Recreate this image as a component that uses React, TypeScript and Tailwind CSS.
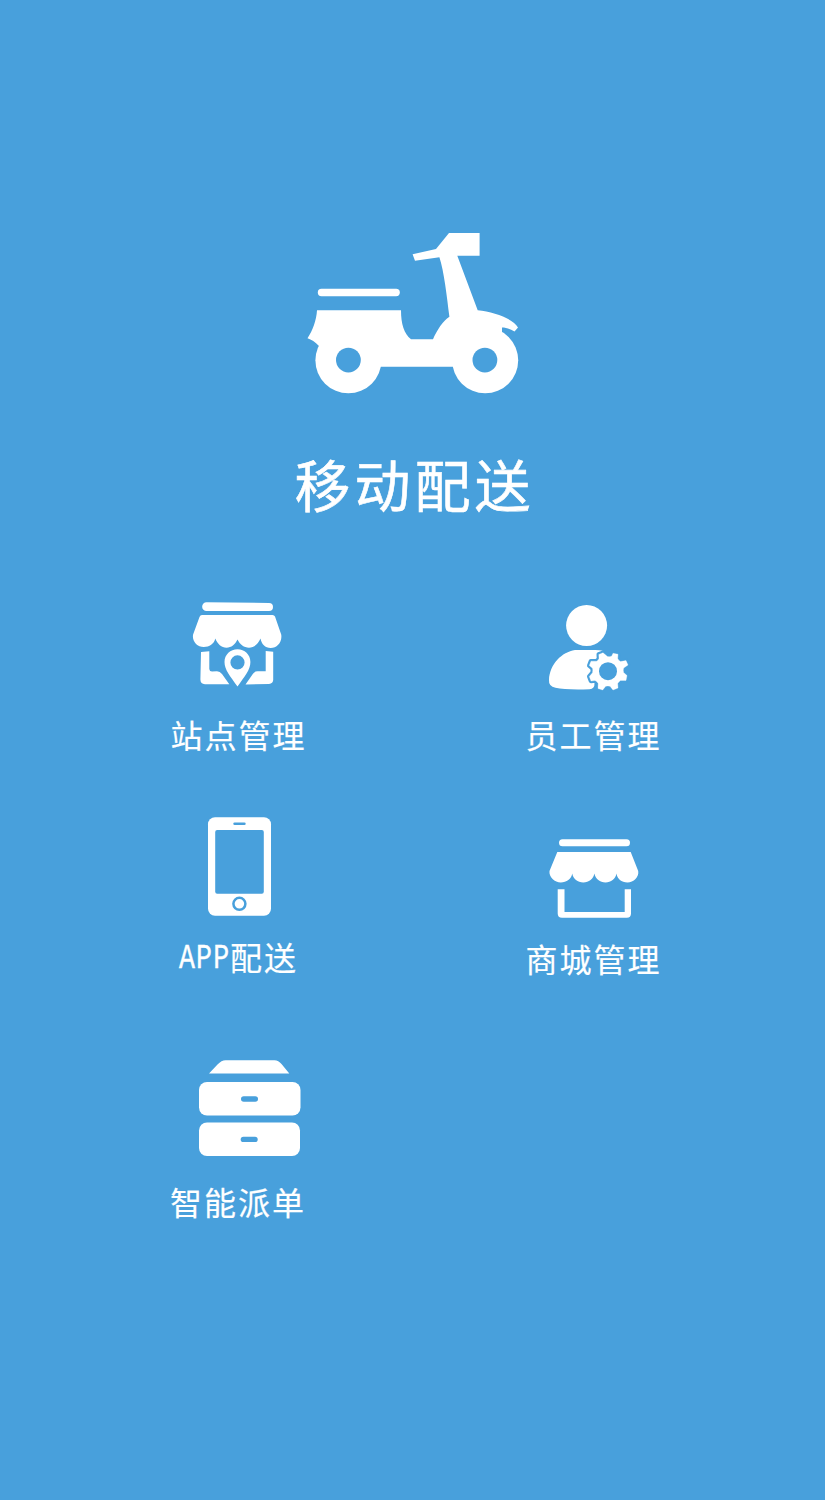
import type { ReactNode } from "react";

const BG = "#48a0dc";

function Scooter() {
  return (
    <svg className="h-[170px] w-[220px]" viewBox="303 228 220 170" fill="white">
      <rect x="317.8" y="288.8" width="82" height="7.4" rx="3.7" />
      <path d="M449 233H479.6V255.8H457.3L477.7 310.3C494 312 513 318.5 518 327.5L514.5 331.5C510 329 506 327.5 502 327.5V332L485 361L452.5 366.8H380L348 361L319 346C315 342 311.5 339.5 307.5 338.3C312.5 331 316.5 320 317 310.3H401C401 324 404 333.5 411 339.3H433C437 330 443 321 449.4 316.8C447 297 444 271 439.4 257.2L415 260.8L412.6 254.3L436 249.1Z" />
      <circle cx="348.4" cy="360.3" r="33" />
      <circle cx="485.2" cy="360.3" r="33" />
      <circle cx="348.4" cy="360.1" r="12.4" fill={BG} />
      <circle cx="484.9" cy="360.1" r="12.4" fill={BG} />
    </svg>
  );
}

function StationIcon() {
  return (
    <svg className="h-[105px] w-[140px]" viewBox="168 595 140 105" fill="white">
      <path d="M206.500 602.300L269 603A4 4 0 0 1 269 611L206.500 611A4.350 4.350 0 0 1 206.500 602.300Z" />
      <path d="M202 615H272.500Q274.300 615 275 616.500L281.200 634.500C282.500 642 277 648 270.700 648C265 648 261.500 644 260.500 638.500C258 644.500 253.500 647.700 249 647.700C244 647.700 240 644.500 237.500 639.500C235 644.500 231.500 647.700 226.500 647.700C221.500 647.700 217.500 644 215.300 638.500C214 644 209.500 647 203.800 647C197 647 191.800 641 193.100 634.500L199.500 617Q200.200 615 202 615Z" />
      <path d="M201 652L209.300 651.300V669Q209.500 671.500 212 671.500L217 671.200Q220 671.500 222 674L229.300 684.200H205Q200.400 684 200.400 679.500Z" />
      <path d="M265.700 651L273.200 651.800V680Q273 683.600 269 684L245.500 684.400L252.800 674Q254.500 671.300 257.500 671.300H265.700Z" />
      <path fillRule="evenodd" d="M237.500 649.300C230.500 649.300 224.500 654.500 224.500 662C224.500 670 230.500 676.500 237.500 686.500C244.500 676.500 250.400 670 250.400 662C250.400 654.500 244.500 649.300 237.500 649.300ZM237.500 655.300A7.100 7.100 0 1 1 237.500 669.500A7.100 7.100 0 1 1 237.500 655.300Z" />
    </svg>
  );
}

const GEAR =
  "M603 652.800L607.500 656.500Q610 657 611.800 656L613 653.300L618 654.200L617.700 658.500Q618.500 660.500 620.500 661.600L626 660.600L628 665L623.700 668Q622.800 670.500 623.600 672.500L627 675.500L626 680.500L620.500 680.500Q618.500 681.800 617.700 683.500L618 688L613 690L610 686.300Q608 685.500 605.700 686.300L602.700 690L598 688.500L598.200 683.500Q597.200 681.500 595 680.500L591 681L589.300 676.500L592.500 672.700Q593.200 670.500 592.500 668.300L589.300 665.500L591 661.200L596.500 661.200Q598.200 660.400 599 658.400L598.800 654.500Z";

function StaffIcon() {
  return (
    <svg className="h-[105px] w-[140px]" viewBox="524 595 140 105" fill="white">
      <circle cx="586.600" cy="625.500" r="20.500" />
      <path d="M575 650H595Q600 650 602.500 650.800V676L594.500 683Q594.800 688.800 589.500 689.200Q566 690 555.500 687.800Q548.500 686.500 549 680C549.700 664 562 652 575 650Z" />
      <path d={GEAR} fill={BG} stroke={BG} strokeWidth="4.600" strokeLinejoin="round" />
      <path d={GEAR} stroke="white" strokeWidth=".300" strokeLinejoin="round" />
      <circle cx="608" cy="671.200" r="9" fill={BG} />
    </svg>
  );
}

function PhoneIcon() {
  return (
    <svg className="h-[115px] w-[140px]" viewBox="168 810 140 115" fill="white">
      <rect x="208" y="817.300" width="63" height="98.500" rx="7" />
      <rect x="215.200" y="830" width="48.600" height="63.800" rx="2" fill={BG} />
      <rect x="233.300" y="822.400" width="12.400" height="2.700" rx="1.350" fill={BG} />
      <circle cx="239.400" cy="903.800" r="6" fill="none" stroke={BG} strokeWidth="2.500" />
    </svg>
  );
}

function ShopIcon() {
  return (
    <svg className="h-[115px] w-[140px]" viewBox="524 810 140 115" fill="white">
      <rect x="559" y="839.200" width="71" height="7" rx="3.500" />
      <path d="M557.300 852H630.700L638.200 871C639.300 877 633.500 882.500 627.500 882.500C621.500 882.500 617 878.500 616.500 873.500C615.500 879 611 882.500 605.500 882.500C600 882.500 595.500 879 594.400 873.500C593.300 879 589 882.500 583.300 882.500C577.600 882.500 573.300 879 572.200 873.500C571.500 879 566.500 882.500 560.800 882.500C554.800 882.500 548.700 877 549.500 871Z" />
      <path d="M557.700 889.200H564.500V911.900H624.700V889.200H631V913.500Q631 917.700 626.800 917.700H562Q557.700 917.700 557.700 913.500Z" />
    </svg>
  );
}

function DrawerIcon() {
  return (
    <svg className="h-[115px] w-[140px]" viewBox="168 1050 140 115" fill="white">
      <path d="M209 1073.500L217.500 1064.500Q221.500 1060.200 225.500 1060.200H274.500Q278.500 1060.200 281.500 1064L289.300 1073.500Z" />
      <rect x="199" y="1082" width="101.500" height="33.500" rx="8" />
      <rect x="199" y="1122.500" width="101" height="33.500" rx="8" />
      <rect x="241" y="1096.200" width="17" height="5.500" rx="2.750" fill={BG} />
      <rect x="240.700" y="1136.700" width="17" height="5.400" rx="2.700" fill={BG} />
    </svg>
  );
}

function Tile({ icon, gap, children }: { icon: ReactNode; gap: string; children: ReactNode }) {
  return (
    <div className="flex flex-col items-center">
      {icon}
      <div className={`flex h-10 items-center whitespace-nowrap text-[32px] leading-10 tracking-[2px] [-webkit-text-stroke:0.2px_white] ${gap}`}>
        {children}
      </div>
    </div>
  );
}

export default function App() {
  return (
    <main className="flex h-[1500px] w-[825px] flex-col bg-[#48a0dc] pt-[228px] font-['Noto_Sans_CJK_SC',sans-serif] text-white">
      <header className="flex h-[367px] flex-col items-center">
        <Scooter />
        <h1 className="mt-[49px] pl-[4px] text-[56px] leading-[72px] font-normal tracking-[4px] [-webkit-text-stroke:0.6px_white]">移动配送</h1>
      </header>
      <section className="ml-[60px] grid w-[712px] grid-cols-[356px_356px] grid-rows-[215px_240px_200px]">
        <Tile icon={<StationIcon />} gap="mt-[14px] pl-px">站点管理</Tile>
        <Tile icon={<StaffIcon />} gap="mt-[14px] pr-px">员工管理</Tile>
        <Tile icon={<PhoneIcon />} gap="mt-[11px]">
          <span className="flex w-[52px] justify-start pt-[6px]">
            <span className="origin-left translate-x-px scale-x-[0.760] font-['Liberation_Mono',monospace] text-[35px] tracking-[1.5px] [-webkit-text-stroke:0.4px_white]">APP</span>
          </span>
          <span>配送</span>
        </Tile>
        <Tile icon={<ShopIcon />} gap="mt-[13px] pr-px">商城管理</Tile>
        <Tile icon={<DrawerIcon />} gap="mt-[16px]">智能派单</Tile>
      </section>
    </main>
  );
}
